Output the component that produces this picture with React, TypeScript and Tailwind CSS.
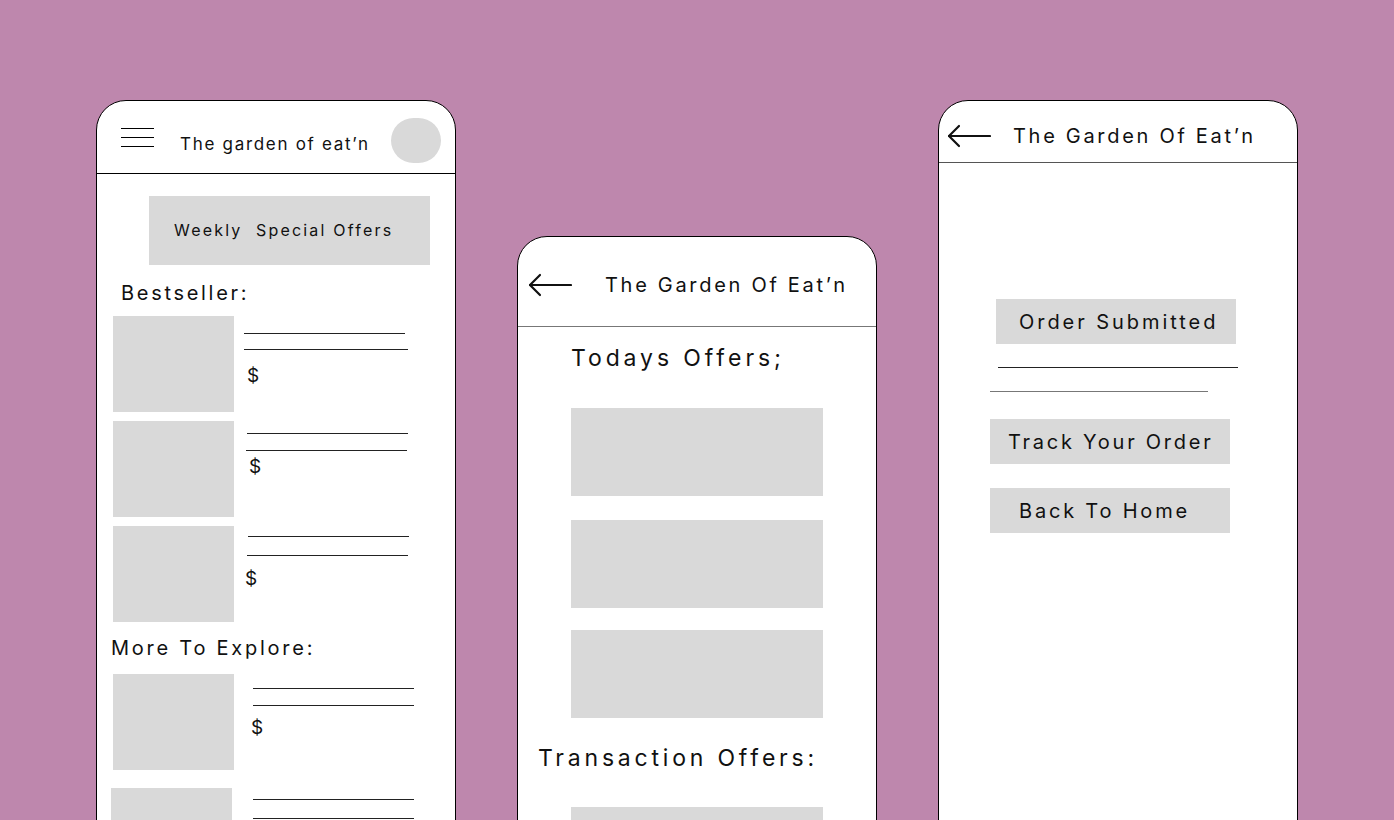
import React from 'react'

const FONT = { fontFamily: 'Inter, "Noto Sans", sans-serif' }

function BackArrow() {
  return (
    <svg width="44" height="24" viewBox="0 0 44 24" fill="none" stroke="#111" strokeWidth="2.2" strokeLinecap="round" strokeLinejoin="round">
      <path d="M43 12H2" />
      <path d="M12 2L2 12L12 22" />
    </svg>
  )
}

function Burger() {
  return (
    <div className="flex w-[33px] flex-col gap-[8px]">
      <div className="h-px bg-black" />
      <div className="h-px bg-black" />
      <div className="h-px bg-black" />
    </div>
  )
}

type Row = {
  img: string
  wrap: string
  l1: string
  l2: string
  price?: string
}

const BEST: Row[] = [
  { img: 'ml-[16px]', wrap: 'mt-[11px]', l1: 'mt-[17px] ml-[10px] w-[161px]', l2: 'mt-[15px] ml-[10px] w-[164px]', price: 'mt-[15px] ml-[13px]' },
  { img: 'ml-[16px]', wrap: 'mt-[9px]', l1: 'mt-[12px] ml-[13px] w-[161px]', l2: 'mt-[16px] ml-[12px] w-[161px]', price: 'mt-[5px] ml-[15px]' },
  { img: 'ml-[16px]', wrap: 'mt-[9px]', l1: 'mt-[10px] ml-[14px] w-[161px]', l2: 'mt-[18px] ml-[13px] w-[161px]', price: 'mt-[12px] ml-[11px]' },
]

const MORE: Row[] = [
  { img: 'ml-[16px]', wrap: 'mt-[14px]', l1: 'mt-[14px] ml-[19px] w-[161px]', l2: 'mt-[16px] ml-[19px] w-[161px]', price: 'mt-[11px] ml-[17px]' },
  { img: 'ml-[14px]', wrap: 'mt-[18px]', l1: 'mt-[11px] ml-[21px] w-[161px]', l2: 'mt-[18px] ml-[21px] w-[161px]' },
]

function ProductRow({ r }: { r: Row }) {
  return (
    <div className={`flex ${r.wrap}`}>
      <div className={`h-[96px] w-[121px] shrink-0 bg-[#d9d9d9] ${r.img}`} />
      <div className="flex flex-col">
        <div className={`h-px bg-[#222] ${r.l1}`} />
        <div className={`h-px bg-[#222] ${r.l2}`} />
        {r.price && <div className={`text-[19px] leading-[22px] text-[#111] ${r.price}`}>$</div>}
      </div>
    </div>
  )
}

function HomeScreen() {
  return (
    <div className="mt-[100px] h-[760px] w-[360px] shrink-0 overflow-hidden rounded-t-[30px] border border-black bg-white">
      <div className="flex h-[73px] items-center border-b border-black">
        <div className="ml-[24px] mt-[0px]">
          <Burger />
        </div>
        <div className="ml-[26px] mt-[16px] text-[17px] tracking-[1.7px] text-[#111]">The garden of eat’n</div>
        <div className="ml-auto mr-[14px] mt-[6px] h-[45px] w-[50px] rounded-full bg-[#d9d9d9]" />
      </div>
      <div className="ml-[52px] mt-[22px] flex h-[69px] w-[281px] items-center bg-[#d9d9d9] pl-[25px]">
        <span className="mt-[-2px] whitespace-pre text-[16px] tracking-[2.2px] text-[#111]">Weekly  Special Offers</span>
      </div>
      <div className="ml-[24px] mt-[16px] text-[20px] leading-[24px] tracking-[2.7px] text-[#111]">Bestseller:</div>
      {BEST.map((r, i) => (
        <ProductRow key={i} r={r} />
      ))}
      <div className="ml-[14px] mt-[14px] text-[20px] leading-[24px] tracking-[2.75px] text-[#111]">More To Explore:</div>
      {MORE.map((r, i) => (
        <ProductRow key={i} r={r} />
      ))}
    </div>
  )
}

function OffersScreen() {
  return (
    <div className="mt-[236px] h-[620px] w-[360px] shrink-0 overflow-hidden rounded-t-[30px] border border-black bg-white">
      <div className="flex h-[90px] items-center border-b border-[#777]">
        <div className="ml-[10px] mt-[6px]">
          <BackArrow />
        </div>
        <div className="ml-[33px] mt-[6px] text-[20px] tracking-[2.7px] text-[#111]">The Garden Of Eat’n</div>
      </div>
      <div className="ml-[53px] mt-[18px] text-[23px] leading-[27px] tracking-[3.9px] text-[#111]">Todays Offers;</div>
      <div className="ml-[53px] mt-[36px] h-[88px] w-[252px] bg-[#d9d9d9]" />
      <div className="ml-[53px] mt-[24px] h-[88px] w-[252px] bg-[#d9d9d9]" />
      <div className="ml-[53px] mt-[22px] h-[88px] w-[252px] bg-[#d9d9d9]" />
      <div className="ml-[20px] mt-[27px] text-[23px] leading-[27px] tracking-[3.8px] text-[#111]">Transaction Offers:</div>
      <div className="ml-[53px] mt-[35px] h-[88px] w-[252px] bg-[#d9d9d9]" />
    </div>
  )
}

function SubmittedScreen() {
  return (
    <div className="mt-[100px] h-[760px] w-[360px] shrink-0 overflow-hidden rounded-t-[30px] border border-black bg-white">
      <div className="flex h-[62px] items-center border-b border-[#555]">
        <div className="ml-[8px] mt-[9px]">
          <BackArrow />
        </div>
        <div className="ml-[22px] mt-[8px] text-[20px] tracking-[2.7px] text-[#111]">The Garden Of Eat’n</div>
      </div>
      <div className="ml-[57px] mt-[136px] flex h-[45px] w-[240px] items-center bg-[#d9d9d9] pl-[23px] text-[20px] tracking-[2.95px] text-[#111]">
        Order Submitted
      </div>
      <div className="ml-[59px] mt-[23px] h-px w-[240px] bg-[#222]" />
      <div className="ml-[51px] mt-[23px] h-px w-[218px] bg-[#777]" />
      <div className="ml-[51px] mt-[27px] flex h-[45px] w-[240px] items-center bg-[#d9d9d9] pl-[18px] text-[20px] tracking-[2.75px] text-[#111]">
        Track Your Order
      </div>
      <div className="ml-[51px] mt-[24px] flex h-[45px] w-[240px] items-center bg-[#d9d9d9] pl-[29px] text-[20px] tracking-[2.8px] text-[#111]">
        Back To Home
      </div>
    </div>
  )
}

export default function App() {
  return (
    <div style={FONT} className="flex h-[820px] w-full items-start gap-[61px] overflow-hidden bg-[#be87ad] pl-[96px]">
      <HomeScreen />
      <OffersScreen />
      <SubmittedScreen />
    </div>
  )
}
